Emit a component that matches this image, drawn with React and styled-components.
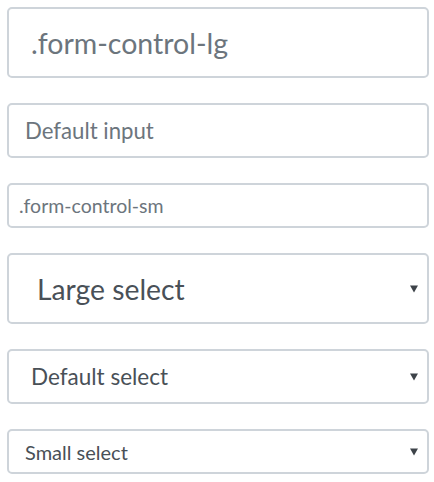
import React from "react";
import styled, { createGlobalStyle, css } from "styled-components";

const Global = createGlobalStyle`
  html, body { margin: 0; padding: 0; background: #fff; }
  body { font-family: Lato, "Open Sans", sans-serif; }
`;

const Stack = styled.div`
  display: flex;
  flex-direction: column;
  gap: 25px;
  padding: 7px 5px 0 7px;
`;

const sizes = {
  lg: { h: 71, pad: 22, fs: 28.5 },
  md: { h: 55, pad: 16, fs: 22.2 },
  sm: { h: 45, pad: 10, fs: 19.5 },
};

const selSizes = {
  lg: { h: 71, pad: 28, fs: 28.3 },
  md: { h: 55, pad: 22, fs: 22.5 },
  sm: { h: 45, pad: 16, fs: 20 },
};

const base = css`
  box-sizing: border-box;
  width: 100%;
  margin: 0;
  border: 2px solid #ced4da;
  border-radius: 5px;
  background: #fff;
  font-family: Lato, "Open Sans", sans-serif;
  outline: none;
`;

const Input = styled.input`
  ${base}
  height: ${(p) => sizes[p.$size].h}px;
  padding: 0 ${(p) => sizes[p.$size].pad}px;
  font-size: ${(p) => sizes[p.$size].fs}px;
  color: #495057;
  &::placeholder { color: #6c757d; opacity: 1; }
`;

const SelectWrap = styled.div`
  position: relative;
`;

const Select = styled.select`
  ${base}
  appearance: none;
  -webkit-appearance: none;
  display: block;
  height: ${(p) => selSizes[p.$size].h}px;
  padding: 0 30px 0 ${(p) => selSizes[p.$size].pad}px;
  font-size: ${(p) => selSizes[p.$size].fs}px;
  color: #495057;
`;

const Caret = styled.svg`
  position: absolute;
  right: 11px;
  top: 50%;
  margin-top: -4px;
  width: 8px;
  height: 8px;
  pointer-events: none;
`;

function SelectField({ size, label }) {
  return (
    <SelectWrap>
      <Select $size={size} defaultValue="a">
        <option value="a">{label}</option>
      </Select>
      <Caret viewBox="0 0 8 8">
        <path d="M0 0.5 H8 L4 7.5 Z" fill="#3d4349" />
      </Caret>
    </SelectWrap>
  );
}

export default function App() {
  return (
    <>
      <Global />
      <Stack>
        <Input $size="lg" placeholder=".form-control-lg" />
        <Input $size="md" placeholder="Default input" />
        <Input $size="sm" placeholder=".form-control-sm" />
        <SelectField size="lg" label="Large select" />
        <SelectField size="md" label="Default select" />
        <SelectField size="sm" label="Small select" />
      </Stack>
    </>
  );
}
